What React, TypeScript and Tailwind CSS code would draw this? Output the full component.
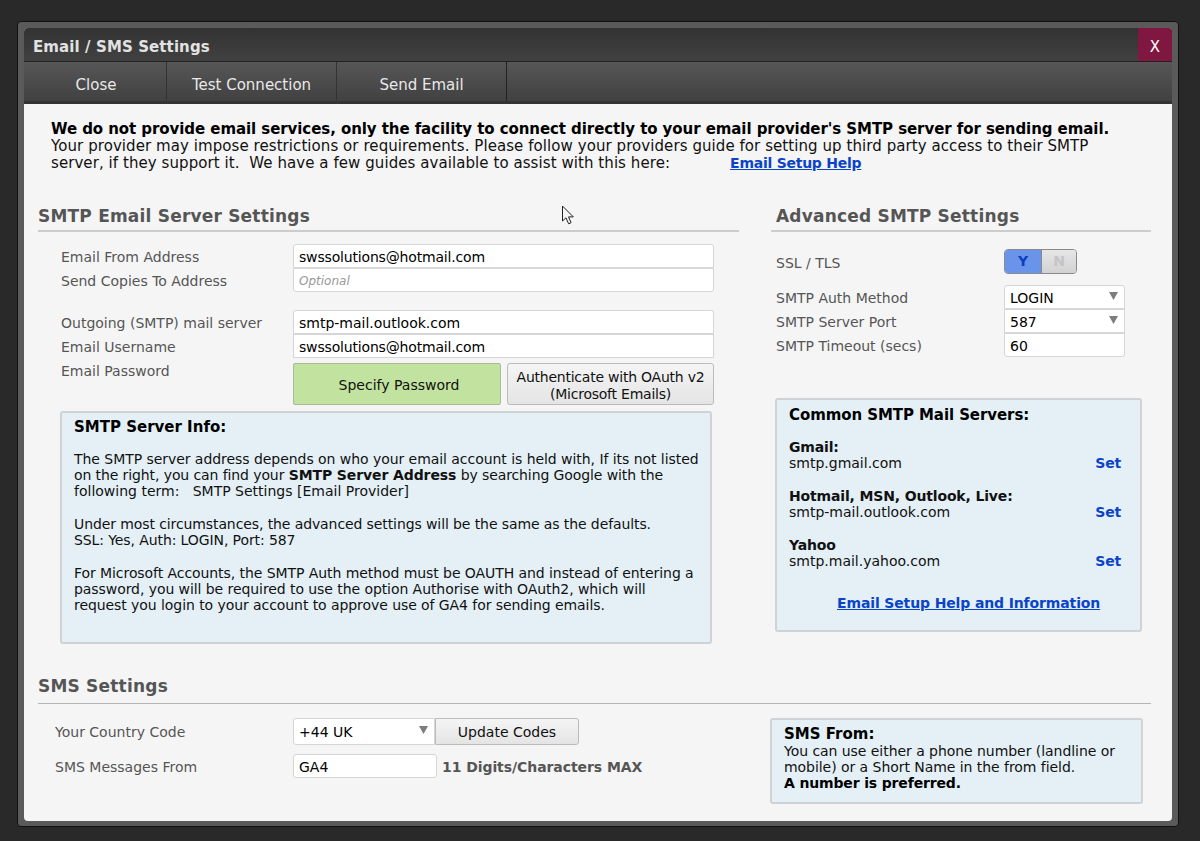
import type { ReactNode } from "react";

function Heading({ children }: { children: ReactNode }) {
  return <div className="text-[17px] font-bold leading-[20px] tracking-[0.2px] text-[#555555]">{children}</div>;
}

function Field({
  children,
  arrowClass,
  className = "",
}: {
  children?: ReactNode;
  arrowClass?: string;
  className?: string;
}) {
  return (
    <div
      className={`relative flex h-[24px] items-center border border-[#d6d6d6] bg-white pl-[5px] pt-[2px] text-[14px] text-black ${className}`}
    >
      {children}
      {arrowClass && (
        <svg className={`absolute right-[6px] ${arrowClass}`} width="9" height="8" viewBox="0 0 9 8">
          <path d="M0 0h9L4.5 8z" fill="#7d7d7d" />
        </svg>
      )}
    </div>
  );
}

function Row({ label, children }: { label: string; children: ReactNode }) {
  return (
    <div className="flex h-[24px] items-center pl-[23px]">
      <div className="w-[232px] pt-[2px] text-[14px] text-[#555555]">{label}</div>
      <div className="w-[421px]">{children}</div>
    </div>
  );
}

function ServerItem({ name, host }: { name: string; host: string }) {
  return (
    <div className="mb-[17px] flex items-end justify-between pr-[19px]">
      <div>
        <div className="font-bold tracking-[-0.15px]">{name}</div>
        <div>{host}</div>
      </div>
      <a className="font-bold tracking-[-0.2px] text-[#0b44c9]">Set</a>
    </div>
  );
}

function Cursor() {
  return (
    <svg className="absolute left-[537px] top-[177px]" width="14" height="21" viewBox="0 0 14 21">
      <path d="M1.5 1v15l3.5-3.2 2.6 6 2.5-1.1-2.6-5.8h4.8z" fill="#f5f5f5" stroke="#222222" strokeWidth="1" />
    </svg>
  );
}

export default function App() {
  return (
    <div className="min-h-[841px] bg-[#292929] pl-[17px] pt-[21px] font-['DejaVu_Sans',sans-serif]">
      <div className="h-[806px] w-[1162px] rounded-[4px] border border-[#111111] bg-[#5a5a5a] pb-[5px] pl-[6px] pr-[6px] pt-[6px]">
        <div className="relative flex h-full flex-col overflow-hidden rounded-[4px] bg-[#f5f5f5]">
          {/* Title */}
          <div className="flex h-[34px] shrink-0 items-center justify-between border-b border-[#222222] bg-gradient-to-b from-[#333333] to-[#414141] pl-[9px]">
            <div className="pt-[5px] text-[15px] font-bold tracking-[0.1px] text-[#e2e2e2]">Email / SMS Settings</div>
            <div className="flex h-full w-[34px] items-center justify-center bg-[#7f1740] pt-[5px] text-[15px] text-white">X</div>
          </div>

          {/* Toolbar */}
          <div className="flex h-[42px] shrink-0 border-b-[3px] border-[#333333] bg-gradient-to-b from-[#565656] to-[#414141] text-[15px] text-[#e8e8e8]">
            <div className="flex w-[143px] items-center justify-center border-r border-[#333333] pl-[2px] pt-[8px]">Close</div>
            <div className="flex w-[170px] items-center justify-center border-r border-[#333333] pt-[8px]">Test Connection</div>
            <div className="flex w-[170px] items-center justify-center border-r border-[#222222] pt-[8px]">Send Email</div>
          </div>

          {/* Intro */}
          <div className="pl-[27px] pt-[17px] text-[15px] leading-[17px] tracking-[0.07px] text-[#111111]">
            <div className="font-bold tracking-[-0.07px] text-black">
              We do not provide email services, only the facility to connect directly to your email provider's SMTP server for sending email.
            </div>
            <div>Your provider may impose restrictions or requirements. Please follow your providers guide for setting up third party access to their SMTP</div>
            <div className="whitespace-pre">
              server, if they support it.  We have a few guides available to assist with this here:
              <a className="ml-[60px] text-[14px] font-bold tracking-[-0.25px] text-[#0b44c9] underline">Email Setup Help</a>
            </div>
          </div>

          {/* SMTP columns */}
          <div className="mt-[34px] flex pl-[14px]">
            <div className="w-[701px]">
              <Heading>SMTP Email Server Settings</Heading>
              <div className="mt-[4px] h-[2px] bg-[#cccccc]" />

              <div className="mt-[12px]">
                <Row label="Email From Address">
                  <Field className="rounded-t-[3px] tracking-[-0.17px]">swssolutions@hotmail.com</Field>
                </Row>
                <Row label="Send Copies To Address">
                  <Field className="rounded-b-[3px]">
                    <span className="text-[12px] italic text-[#999999]">Optional</span>
                  </Field>
                </Row>
              </div>

              <div className="mt-[18px]">
                <Row label="Outgoing (SMTP) mail server">
                  <Field className="rounded-t-[3px]">smtp-mail.outlook.com</Field>
                </Row>
                <Row label="Email Username">
                  <Field className="tracking-[-0.17px]">swssolutions@hotmail.com</Field>
                </Row>
              </div>

              <div className="mt-[5px] flex pl-[23px]">
                <div className="w-[232px] text-[14px] leading-[16px] text-[#555555]">Email Password</div>
                <button className="flex h-[42px] w-[208px] items-center justify-center rounded-[2px] border border-[#a9b99a] bg-[#c2e2a0] pl-[4px] pt-[3px] text-[14px] text-[#111111]">
                  Specify Password
                </button>
                <button className="ml-[6px] h-[42px] w-[207px] rounded-[3px] border border-[#bbbbbb] bg-gradient-to-b from-[#f5f5f5] to-[#e4e4e4] pt-[4px] text-[14px] leading-[17px] tracking-[-0.23px] text-[#111111]">
                  Authenticate with OAuth v2
                  <br />
                  (Microsoft Emails)
                </button>
              </div>

              <div className="ml-[22px] mt-[6px] h-[233px] w-[652px] rounded-[3px] border-2 border-[#cfd3d5] bg-[#e4f0f6] pl-[12px] pt-[6px] text-[14px] leading-[16px] tracking-[-0.1px] text-[#111111]">
                <div className="text-[15px] font-bold tracking-normal text-black">SMTP Server Info:</div>
                <div className="mt-[16px] whitespace-pre">
                  <div className="tracking-[-0.05px]">The SMTP server address depends on who your email account is held with, If its not listed</div>
                  <div>
                    {"on the right, you can find your "}
                    <span className="font-bold">SMTP Server Address</span>
                    {" by searching Google with the"}
                  </div>
                  <div className="tracking-normal">{"following term:   SMTP Settings [Email Provider]"}</div>
                </div>
                <div className="mt-[17px]">
                  <div>Under most circumstances, the advanced settings will be the same as the defaults.</div>
                  <div>SSL: Yes, Auth: LOGIN, Port: 587</div>
                </div>
                <div className="mt-[17px] whitespace-pre tracking-[-0.07px]">
                  <div>For Microsoft Accounts, the SMTP Auth method must be OAUTH and instead of entering a</div>
                  <div>password, you will be required to use the option Authorise with OAuth2, which will</div>
                  <div>request you login to your account to approve use of GA4 for sending emails.</div>
                </div>
              </div>
            </div>

            <div className="ml-[32px] w-[380px]">
              <div className="pl-[5px]">
                <Heading>Advanced SMTP Settings</Heading>
              </div>
              <div className="mt-[4px] h-[2px] bg-[#cccccc]" />

              <div className="mt-[17px] flex items-center pl-[5px]">
                <div className="w-[228px] pt-[3px] text-[14px] text-[#555555]">SSL / TLS</div>
                <div className="flex h-[25px] w-[73px] overflow-hidden rounded-[4px] border border-[#8a8a8a] text-[14px] font-bold">
                  <div className="flex w-[36px] items-center justify-center bg-[#6a94ea] text-[#0b3fc0]">Y</div>
                  <div className="flex flex-1 items-center justify-center border-l border-[#8a8a8a] bg-gradient-to-b from-[#e6e6e6] to-[#d2d2d2] text-[#c4c4c4]">N</div>
                </div>
              </div>

              <div className="mt-[11px] pl-[5px] text-[14px] text-[#555555]">
                <div className="flex h-[24px] items-center">
                  <div className="w-[228px] pt-[2px]">SMTP Auth Method</div>
                  <Field arrowClass="top-[6px]" className="w-[121px] rounded-t-[3px]">LOGIN</Field>
                </div>
                <div className="flex h-[24px] items-center">
                  <div className="w-[228px] pt-[2px]">SMTP Server Port</div>
                  <Field arrowClass="top-[6px]" className="w-[121px]">587</Field>
                </div>
                <div className="flex h-[24px] items-center">
                  <div className="w-[228px] pt-[2px]">SMTP Timeout (secs)</div>
                  <Field className="w-[121px] rounded-b-[3px]">60</Field>
                </div>
              </div>

              <div className="ml-[4px] mt-[41px] h-[234px] w-[367px] rounded-[3px] border-2 border-[#cfd3d5] bg-[#e4f0f6] pl-[12px] pt-[7px] text-[14px] leading-[16px] text-[#111111]">
                <div className="mb-[16px] text-[15px] font-bold tracking-[-0.08px] text-black">Common SMTP Mail Servers:</div>
                <ServerItem name="Gmail:" host="smtp.gmail.com" />
                <ServerItem name="Hotmail, MSN, Outlook, Live:" host="smtp-mail.outlook.com" />
                <ServerItem name="Yahoo" host="smtp.mail.yahoo.com" />
                <div className="mt-[26px] pl-[48px]">
                  <a className="font-bold tracking-[-0.13px] text-[#0b44c9] underline">Email Setup Help and Information</a>
                </div>
              </div>
            </div>
          </div>

          {/* SMS */}
          <div className="mt-[32px] pl-[14px]">
            <Heading>SMS Settings</Heading>
            <div className="mt-[7px] h-px w-[1113px] bg-[#b5b5b5]" />
            <div className="mt-[14px] flex">
              <div className="w-[732px] pl-[17px] text-[14px] text-[#555555]">
                <div className="flex h-[27px] items-center">
                  <div className="w-[238px] pt-[2px]">Your Country Code</div>
                  <Field arrowClass="top-[7px]" className="h-[27px] w-[142px] rounded-l-[3px]">+44 UK</Field>
                  <button className="h-[27px] w-[144px] rounded-r-[3px] border border-[#bbbbbb] bg-gradient-to-b from-[#f5f5f5] to-[#e4e4e4] pt-[1px] text-[#111111]">
                    Update Codes
                  </button>
                </div>
                <div className="mt-[9px] flex h-[24px] items-center">
                  <div className="w-[238px] pt-[3px]">SMS Messages From</div>
                  <Field className="w-[144px] rounded-[3px]">GA4</Field>
                  <div className="ml-[5px] pt-[3px] font-bold tracking-[-0.07px]">11 Digits/Characters MAX</div>
                </div>
              </div>
              <div className="h-[86px] w-[373px] rounded-[3px] border-2 border-[#cfd3d5] bg-[#e4f0f6] pl-[12px] pt-[6px] text-[14px] leading-[16px] tracking-[-0.05px] text-[#111111]">
                <div className="mb-[1px] text-[15px] font-bold tracking-normal text-black">SMS From:</div>
                <div>You can use either a phone number (landline or</div>
                <div>mobile) or a Short Name in the from field.</div>
                <div className="font-bold tracking-[-0.15px] text-black">A number is preferred.</div>
              </div>
            </div>
          </div>

          <Cursor />
        </div>
      </div>
    </div>
  );
}
